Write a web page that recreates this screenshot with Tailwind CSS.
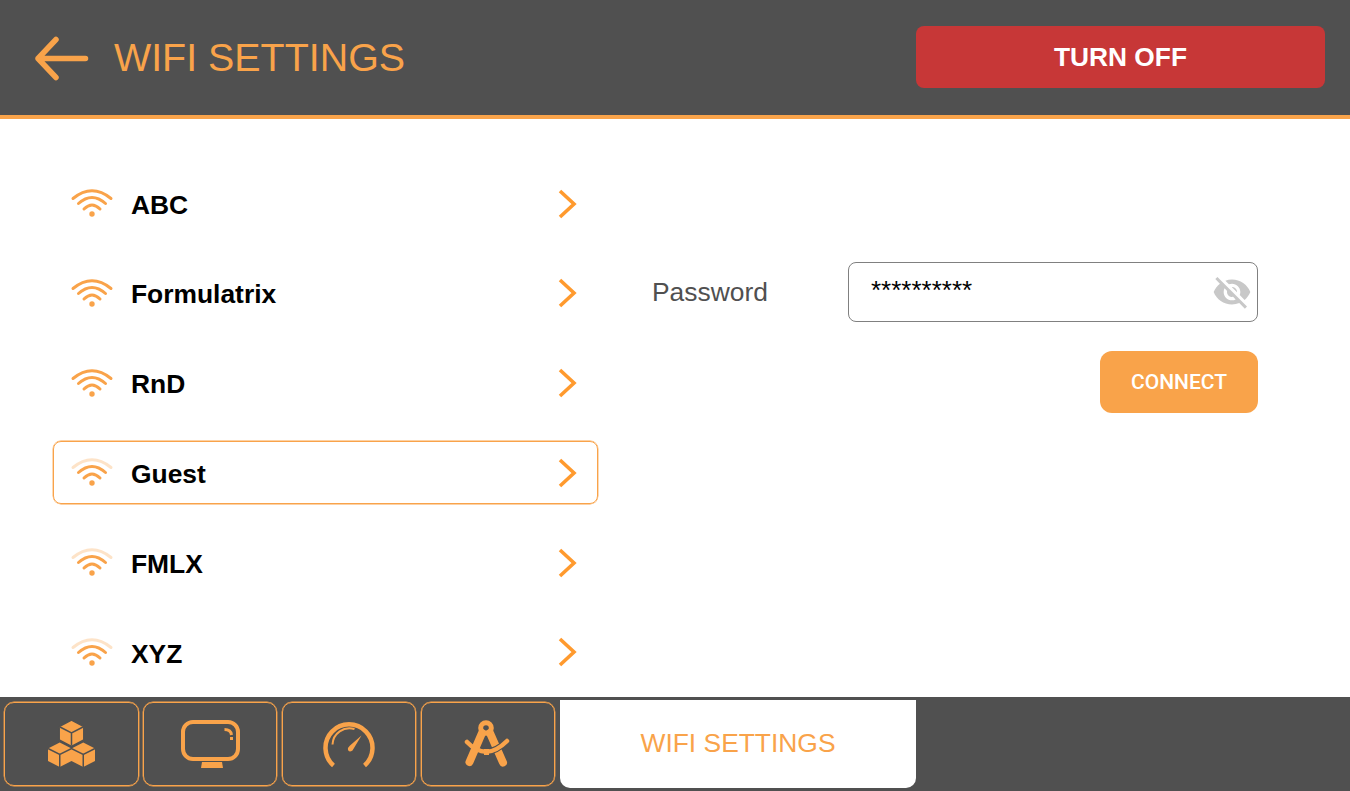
<!DOCTYPE html>
<html lang="en">
<head>
    <meta charset="UTF-8">
    <meta name="viewport" content="width=device-width, initial-scale=1.0">
    <title>Wifi Settings</title>
    <script src="https://cdn.jsdelivr.net/npm/@tailwindcss/browser@4"></script>
</head>
<body class="h-screen w-screen overflow-hidden bg-white flex flex-col font-['Liberation_Sans',Arial,sans-serif]">
    <!-- header -->
    <header class="h-[119px] shrink-0 bg-[#505050] border-b-4 border-[#f9a34a] flex items-center pl-[32px] pr-[25px]">
        <svg class="w-[60px] h-[50px]" viewBox="0 0 60 50" fill="none" stroke="#f9a34a" stroke-width="5.5" stroke-linecap="round" stroke-linejoin="round">
            <path d="M53.500 25.500H6M24 6.500L6 25.500l18 19"/>
        </svg>
        <h1 class="ml-[22px] text-[39.4px] leading-none text-[#f9a34a]">WIFI SETTINGS</h1>
        <button class="ml-auto mb-[1px] pt-[2px] w-[409px] h-[62px] rounded-lg bg-[#c73737] text-white font-bold text-[26.3px]">TURN OFF</button>
    </header>

    <!-- list and password form -->
    <main class="flex-1 flex min-h-0 pl-[53px]">
        <ul class="w-[545px] pt-[53px] flex flex-col gap-[26.8px]">
            <li class="h-[63px] px-[18px] flex items-center rounded-lg border border-transparent">
                <svg class="w-[40px] h-[27px] overflow-visible" viewBox="0 0 40 27" fill="none" stroke="#f9a34a" stroke-width="3" stroke-linecap="round">
                    <path d="M1 8.500Q20 -6.900 39 8.500"/><path d="M6.500 13.500Q20 1.500 33.500 13.500"/><path d="M12 19Q20 11 28 19"/><circle cx="20" cy="24" r="2.700" fill="#f9a34a" stroke="none"/>
                </svg>
                <span class="ml-[19px] mt-[4px] text-[26.4px] font-bold text-black">ABC</span>
                <svg class="ml-auto mr-[2px] w-[20px] h-[30px]" viewBox="0 0 20 30" fill="none" stroke="#ff9a2e" stroke-width="3.6"><path d="M3 2l14 13L3 28"/></svg>
            </li>
            <li class="h-[63px] px-[18px] flex items-center rounded-lg border border-transparent">
                <svg class="w-[40px] h-[27px] overflow-visible" viewBox="0 0 40 27" fill="none" stroke="#f9a34a" stroke-width="3" stroke-linecap="round">
                    <path d="M1 8.500Q20 -6.900 39 8.500"/><path d="M6.500 13.500Q20 1.500 33.500 13.500"/><path d="M12 19Q20 11 28 19"/><circle cx="20" cy="24" r="2.700" fill="#f9a34a" stroke="none"/>
                </svg>
                <span class="ml-[19px] mt-[4px] text-[26.4px] font-bold text-black">Formulatrix</span>
                <svg class="ml-auto mr-[2px] w-[20px] h-[30px]" viewBox="0 0 20 30" fill="none" stroke="#ff9a2e" stroke-width="3.6"><path d="M3 2l14 13L3 28"/></svg>
            </li>
            <li class="h-[63px] px-[18px] flex items-center rounded-lg border border-transparent">
                <svg class="w-[40px] h-[27px] overflow-visible" viewBox="0 0 40 27" fill="none" stroke="#f9a34a" stroke-width="3" stroke-linecap="round">
                    <path d="M1 8.500Q20 -6.900 39 8.500"/><path d="M6.500 13.500Q20 1.500 33.500 13.500"/><path d="M12 19Q20 11 28 19"/><circle cx="20" cy="24" r="2.700" fill="#f9a34a" stroke="none"/>
                </svg>
                <span class="ml-[19px] mt-[4px] text-[26.4px] font-bold text-black">RnD</span>
                <svg class="ml-auto mr-[2px] w-[20px] h-[30px]" viewBox="0 0 20 30" fill="none" stroke="#ff9a2e" stroke-width="3.6"><path d="M3 2l14 13L3 28"/></svg>
            </li>
            <li class="h-[63px] px-[18px] flex items-center rounded-lg border border-[#f9a34a] shadow-[0_0_0_0.4px_#f9a34a]">
                <svg class="w-[40px] h-[27px] overflow-visible" viewBox="0 0 40 27" fill="none" stroke="#f9a34a" stroke-width="3" stroke-linecap="round">
                    <path d="M1 8.500Q20 -6.900 39 8.500" stroke-opacity="0.3"/><path d="M6.500 13.500Q20 1.500 33.500 13.500"/><path d="M12 19Q20 11 28 19"/><circle cx="20" cy="24" r="2.700" fill="#f9a34a" stroke="none"/>
                </svg>
                <span class="ml-[19px] mt-[4px] text-[26.4px] font-bold text-black">Guest</span>
                <svg class="ml-auto mr-[2px] w-[20px] h-[30px]" viewBox="0 0 20 30" fill="none" stroke="#ff9a2e" stroke-width="3.6"><path d="M3 2l14 13L3 28"/></svg>
            </li>
            <li class="h-[63px] px-[18px] flex items-center rounded-lg border border-transparent">
                <svg class="w-[40px] h-[27px] overflow-visible" viewBox="0 0 40 27" fill="none" stroke="#f9a34a" stroke-width="3" stroke-linecap="round">
                    <path d="M1 8.500Q20 -6.900 39 8.500" stroke-opacity="0.3"/><path d="M6.500 13.500Q20 1.500 33.500 13.500"/><path d="M12 19Q20 11 28 19"/><circle cx="20" cy="24" r="2.700" fill="#f9a34a" stroke="none"/>
                </svg>
                <span class="ml-[19px] mt-[4px] text-[26.4px] font-bold text-black">FMLX</span>
                <svg class="ml-auto mr-[2px] w-[20px] h-[30px]" viewBox="0 0 20 30" fill="none" stroke="#ff9a2e" stroke-width="3.6"><path d="M3 2l14 13L3 28"/></svg>
            </li>
            <li class="h-[63px] px-[18px] flex items-center rounded-lg border border-transparent">
                <svg class="w-[40px] h-[27px] overflow-visible" viewBox="0 0 40 27" fill="none" stroke="#f9a34a" stroke-width="3" stroke-linecap="round">
                    <path d="M1 8.500Q20 -6.900 39 8.500" stroke-opacity="0.3"/><path d="M6.500 13.500Q20 1.500 33.500 13.500"/><path d="M12 19Q20 11 28 19"/><circle cx="20" cy="24" r="2.700" fill="#f9a34a" stroke="none"/>
                </svg>
                <span class="ml-[19px] mt-[4px] text-[26.4px] font-bold text-black">XYZ</span>
                <svg class="ml-auto mr-[2px] w-[20px] h-[30px]" viewBox="0 0 20 30" fill="none" stroke="#ff9a2e" stroke-width="3.6"><path d="M3 2l14 13L3 28"/></svg>
            </li>
        </ul>

        <section class="w-[606px] ml-[54px] pt-[143px] flex flex-col items-end">
            <div class="w-full flex items-center justify-between">
                <label class="mt-[2px] text-[26.4px] text-[#505050]">Password</label>
                <div class="relative w-[410px] h-[60px] rounded-lg border border-[#808080] pl-[22px] pb-[4px] flex items-center">
                    <span class="text-[26px] text-black leading-none">**********</span>
                    <svg class="absolute right-[5px] top-[9px] w-[40px] h-[40px]" viewBox="0 0 24 24" fill="#c8c8c8">
                        <path d="M12 7c2.76 0 5 2.24 5 5 0 .65-.13 1.26-.36 1.83l2.92 2.92c1.51-1.26 2.7-2.89 3.43-4.75-1.73-4.39-6-7.5-11-7.5-1.4 0-2.74.25-3.98.7l2.16 2.16C10.74 7.13 11.35 7 12 7zM2 4.27l2.28 2.28.46.46C3.08 8.3 1.78 10.02 1 12c1.73 4.39 6 7.5 11 7.5 1.55 0 3.03-.3 4.38-.84l.42.42L19.73 22 21 20.73 3.27 3 2 4.27zM7.53 9.8l1.55 1.55c-.05.21-.08.43-.08.65 0 1.66 1.34 3 3 3 .22 0 .44-.03.65-.08l1.55 1.55c-.67.33-1.41.53-2.2.53-2.76 0-5-2.24-5-5 0-.79.2-1.53.53-2.2zm4.31-.78l3.15 3.15.02-.16c0-1.66-1.34-3-3-3l-.17.01z"/>
                    </svg>
                </div>
            </div>
            <button class="mt-[29px] pt-[2px] w-[158px] h-[62px] rounded-xl bg-[#f9a34a] text-white text-[21px] font-medium font-['Roboto',sans-serif]">CONNECT</button>
        </section>
    </main>

    <!-- bottom tabs -->
    <nav class="h-[94px] shrink-0 bg-[#505050] flex items-start pl-[4px] pt-[3px]">
        <div class="mt-[2px] w-[135px] h-[84px] rounded-[10px] border border-[#f9a34a] shadow-[0_0_0_0.4px_#f9a34a] flex items-center justify-center">
            <svg class="w-[47px] h-[46px] overflow-visible" viewBox="0 0 47 46" fill="#f9a34a" stroke="#505050" stroke-width="1.500">
                <path d="M11.750 21.500L23.500 27.500 35.250 21.500 47 27.500V40L35.250 46 23.500 40 11.750 46 0 40V27.500z" stroke="none"/>
                <path d="M0 27.500L11.750 33.500 23.500 27.500 35.250 33.500 47 27.500M11.750 33.500V46M35.250 33.500V46" fill="none"/>
                <path d="M23.500 -0.800L35.800 5.600V18.900L23.500 25.300 11.200 18.900V5.600z"/>
                <path d="M12 6L23.500 12 35 6M23.500 12V24.500" fill="none"/>
            </svg>
        </div>
        <div class="ml-[4px] mt-[2px] w-[134px] h-[84px] rounded-[10px] border border-[#f9a34a] shadow-[0_0_0_0.4px_#f9a34a] flex items-center justify-center">
            <svg class="ml-[2px] w-[60px] h-[48px]" viewBox="0 0 60 48" fill="none" stroke="#f9a34a" stroke-width="4">
                <rect x="2" y="2" width="55" height="37" rx="10"/>
                <path d="M43.500 9.500Q50 9.500 50.500 15" stroke-width="3"/>
                <path d="M50.500 17v3" stroke-width="3"/>
                <path d="M21 42h20l1 6H20z" fill="#f9a34a" stroke="none"/>
            </svg>
        </div>
        <div class="ml-[5px] mt-[2px] w-[134px] h-[84px] rounded-[10px] border border-[#f9a34a] shadow-[0_0_0_0.4px_#f9a34a] flex items-center justify-center">
            <svg class="w-[52px] h-[48px]" viewBox="0 0 52 48" fill="none" stroke="#f9a34a">
                <path d="M10.500 45.500A23.500 23.500 0 1 1 41.500 45.500" stroke-width="4.500"/>
                <path d="M9.500 24.500A17 17 0 0 1 31.500 9" stroke-width="2"/>
                <path d="M38.500 15.500L29.500 30.500Q26 32.500 25 30Q24.500 27.500 27 25.500z" fill="#f9a34a" stroke="none"/>
            </svg>
        </div>
        <div class="ml-[5px] mt-[2px] w-[134px] h-[84px] rounded-[10px] border border-[#f9a34a] shadow-[0_0_0_0.4px_#f9a34a] flex items-center justify-center">
            <svg class="w-[48px] h-[48px]" viewBox="0 0 48 48" fill="none" stroke="#f9a34a">
                <path d="M26 13L39 42.500" stroke-width="8" stroke-linecap="round"/>
                <path d="M22 32Q33 31 43 21" stroke="#505050" stroke-width="6.500"/>
                <path d="M3 22Q22 42 43 21" stroke-width="4.500" stroke-linecap="round"/>
                <path d="M18 13L5.500 42" stroke-width="8" stroke-linecap="round"/>
                <path d="M20 29h5v6h-5z" fill="#f9a34a" stroke="none"/>
                <circle cx="22" cy="8" r="5.300" stroke-width="5"/>
            </svg>
        </div>
        <div class="ml-[5px] w-[356px] h-[88px] rounded-b-[10px] bg-white flex items-center justify-center text-[26.4px] text-[#f9a34a]">WIFI SETTINGS</div>
    </nav>
</body>
</html>
